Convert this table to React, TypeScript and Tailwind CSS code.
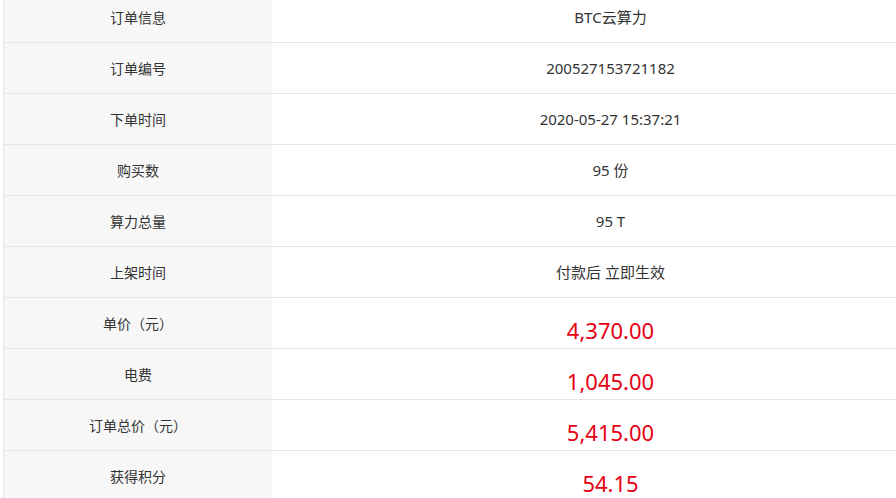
const rows: { label: string; value: string; price?: boolean }[] = [
  { label: '订单信息', value: 'BTC云算力' },
  { label: '订单编号', value: '200527153721182' },
  { label: '下单时间', value: '2020-05-27 15:37:21' },
  { label: '购买数', value: '95 份' },
  { label: '算力总量', value: '95 T' },
  { label: '上架时间', value: '付款后 立即生效' },
  { label: '单价（元）', value: '4,370.00', price: true },
  { label: '电费', value: '1,045.00', price: true },
  { label: '订单总价（元）', value: '5,415.00', price: true },
  { label: '获得积分', value: '54.15', price: true },
];

export default function App() {
  return (
    <div className="w-[896px] h-[498px] overflow-hidden bg-white font-['Noto_Sans','Noto_Sans_CJK_SC',sans-serif]">
      <div className="ml-[3px] -mt-[8px] w-[946px] border-l border-[#e8e8e8]">
        {rows.map((row) => (
          <div key={row.label} className="flex h-[51px] border-b border-[#e6e6e6]">
            <div className="flex w-[268px] shrink-0 items-center justify-center bg-[#f7f7f7] text-[14px] text-[#333]">
              {row.label}
            </div>
            {row.price ? (
              <div className="flex flex-1 items-center justify-center pt-[15px] text-[22px] text-[#e60012]">
                {row.value}
              </div>
            ) : (
              <div className="flex flex-1 items-center justify-center text-[15px] text-[#333]">
                {row.value}
              </div>
            )}
          </div>
        ))}
      </div>
    </div>
  );
}
